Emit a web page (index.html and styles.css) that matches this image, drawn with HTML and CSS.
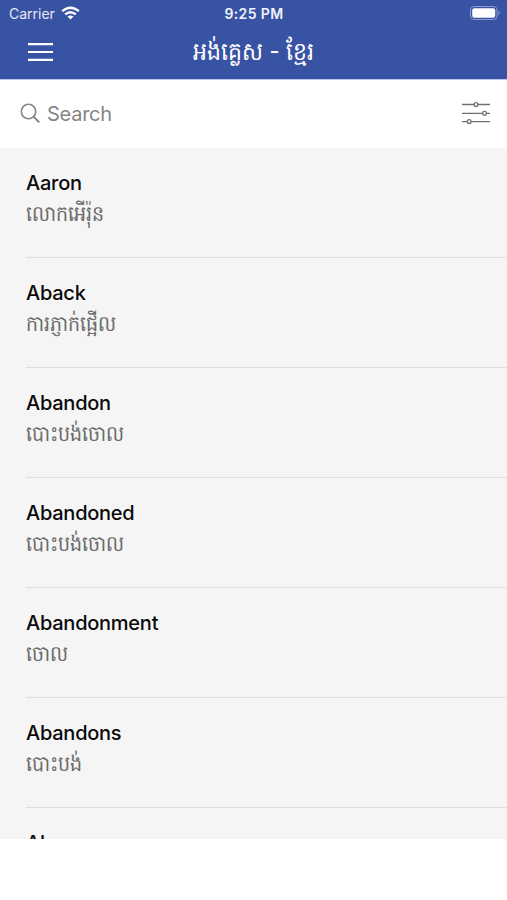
FILE: index.html
```html
<!DOCTYPE html>
<html lang="km">
<head>
<meta charset="utf-8">
<title>អង់គ្លេស - ខ្មែរ</title>
<link rel="stylesheet" href="styles.css">
</head>
<body>
<header class="header">
  <div class="status">
    <div class="carrier"><span>Carrier</span>
      <svg class="wifi" width="19" height="14" viewBox="0 0 19 14"><g fill="none" stroke="#fff" stroke-width="2.4"><path d="M1.2 5.2Q9.5-1.8 17.8 5.2"/><path d="M4.2 8.4Q9.5 4 14.8 8.4"/></g><path d="M6.5 10.6Q9.5 8.4 12.5 10.6L9.5 13.4Z" fill="#fff"/></svg>
    </div>
    <div class="time">9:25 PM</div>
    <svg class="battery" width="31" height="14" viewBox="0 0 31 14"><rect x=".5" y=".5" width="26.5" height="13" rx="3.5" fill="none" stroke="#8d9ccc"/><rect x="2.2" y="2.2" width="23" height="9.6" rx="2" fill="#fff"/><path d="M28.5 4.5Q30.8 7 28.5 9.5Z" fill="#8d9ccc"/></svg>
  </div>
  <div class="navbar">
    <svg class="menu" width="26" height="20" viewBox="0 0 26 20"><path d="M1 2.2H26M1 10H26M1 17.8H26" stroke="#fff" stroke-width="2.2"/></svg>
    <h1 class="title">អង់គ្លេស - ខ្មែរ</h1>
  </div>
</header>
<div class="search">
  <svg width="21" height="21" viewBox="0 0 21 21"><g fill="none" stroke="#858585" stroke-width="1.6"><circle cx="8.5" cy="8.5" r="7.2"/><path d="M13.6 13.6L19.2 19.4" stroke-width="2"/></g></svg>
  <span class="placeholder">Search</span>
  <svg class="filter" width="30" height="24" viewBox="0 0 30 24"><g fill="#fff" stroke="#707070" stroke-width="1.3"><path d="M1 3.5H29M1 12.3H29M1 20.6H29"/><circle cx="15" cy="3.5" r="1.9"/><circle cx="23.5" cy="12.3" r="1.9"/><circle cx="8.2" cy="20.6" r="1.9"/></g></svg>
</div>
<main class="list">
  <article class="entry"><h2>Aaron</h2><p>លោកអើរ៉ុន</p></article>
  <article class="entry"><h2>Aback</h2><p>ការភ្ញាក់ផ្អើល</p></article>
  <article class="entry"><h2>Abandon</h2><p>បោះបង់ចោល</p></article>
  <article class="entry"><h2>Abandoned</h2><p>បោះបង់ចោល</p></article>
  <article class="entry"><h2>Abandonment</h2><p>ចោល</p></article>
  <article class="entry"><h2>Abandons</h2><p>បោះបង់</p></article>
  <article class="entry"><h2>Ab</h2></article>
</main>
</body>
</html>
```
FILE: styles.css
```css
* { box-sizing: border-box; }
body { margin: 0; background: #fff; font-family: Inter, "Noto Sans", "DejaVu Sans", sans-serif; height: 900px; overflow: hidden; }
.header { height: 79px; background: #3953a4; color: #fff; }
.status { display: grid; grid-template-columns: 1fr auto 1fr; align-items: center; height: 27px; padding: 0 6px 0 9px; font-size: 14px; }
.carrier { display: flex; align-items: center; gap: 6px; color: #e6eaf6; }
.wifi { margin-top: -1px; }
.time { padding-right: 2px; font-weight: 600; letter-spacing: 0.4px; color: #f2f4fb; }
.battery { justify-self: end; margin-top: -1px; }
.navbar { display: grid; grid-template-columns: 28px 1fr 28px; align-items: center; height: 50px; padding: 0 27px; }
.title { margin: -3px 0 0; text-align: center; font-size: 22px; font-weight: 400; line-height: 40px; white-space: nowrap; transform: scaleY(1.15); }
.search { display: flex; align-items: center; height: 69px; padding: 0 16px 0 20px; border-top: 1px solid #b9c6ee; color: #858585; }
.search svg { margin-top: -2px; }
.placeholder { margin: 0 0 0 6px; font-size: 20px; letter-spacing: -0.25px; }
.search .filter { margin-left: auto; }
.list { height: 691px; overflow: hidden; padding-left: 26px; background: #f5f5f5; }
.entry { height: 110px; padding-top: 22px; border-bottom: 1px solid #dfdfdf; }
.entry h2 { margin: 0; font-size: 20px; line-height: 27px; font-weight: 550; letter-spacing: -0.25px; color: #0a0a0a; }
.entry p { margin: -1px 0 0; font-size: 19px; line-height: 36px; color: #6b6b6b; white-space: nowrap; transform: scaleY(1.14); }
```
